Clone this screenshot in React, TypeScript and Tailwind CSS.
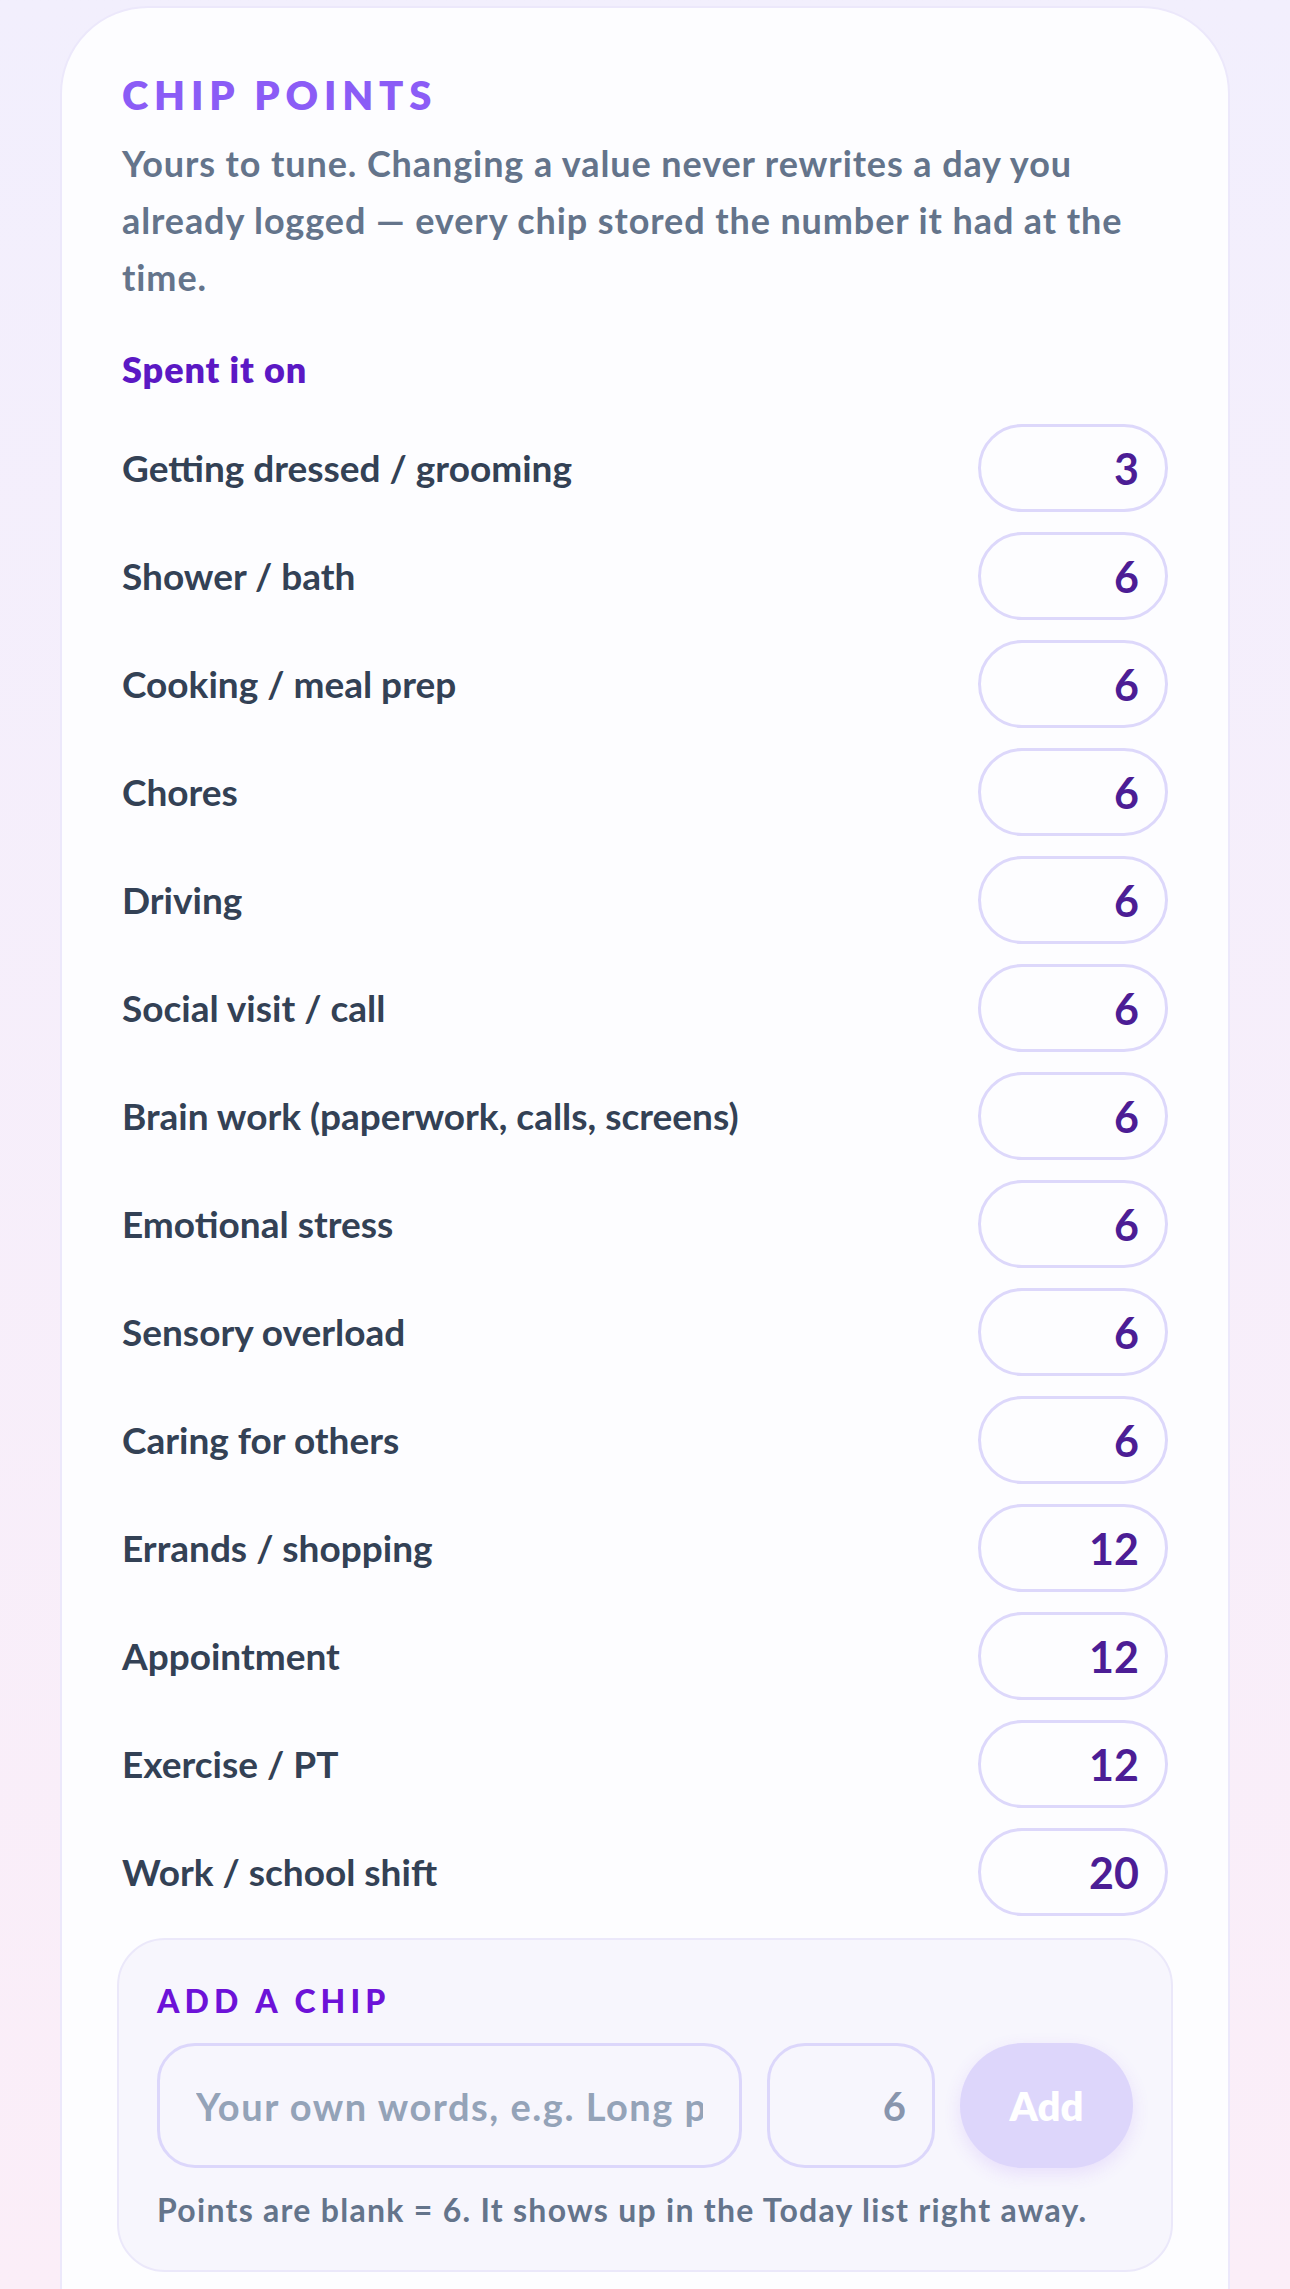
import { useState } from 'react';

const defaultChips = [
  { id: 'dress', label: 'Getting dressed / grooming', points: 3 },
  { id: 'shower', label: 'Shower / bath', points: 6 },
  { id: 'cook', label: 'Cooking / meal prep', points: 6 },
  { id: 'chores', label: 'Chores', points: 6 },
  { id: 'drive', label: 'Driving', points: 6 },
  { id: 'social', label: 'Social visit / call', points: 6 },
  { id: 'brain', label: 'Brain work (paperwork, calls, screens)', points: 6 },
  { id: 'stress', label: 'Emotional stress', points: 6 },
  { id: 'sensory', label: 'Sensory overload', points: 6 },
  { id: 'caring', label: 'Caring for others', points: 6 },
  { id: 'errands', label: 'Errands / shopping', points: 12 },
  { id: 'appt', label: 'Appointment', points: 12 },
  { id: 'exercise', label: 'Exercise / PT', points: 12 },
  { id: 'work', label: 'Work / school shift', points: 20 },
];

const ChipRow = ({ label, value, onChange }: { label: string; value: number; onChange: (v: number) => void }) => (
  <li className="flex h-[88px] items-center justify-between">
    <span className="text-[37px] font-bold text-[#334155]">{label}</span>
    <input
      type="number"
      value={value}
      onChange={(e) => onChange(Number(e.target.value))}
      className="h-[88px] w-[190px] rounded-full border-[3px] border-[#ddd8fb] bg-transparent pr-[26px] text-right text-[43px] font-bold text-[#4c1d95] outline-none [appearance:textfield] [&::-webkit-inner-spin-button]:appearance-none"
    />
  </li>
);

export default function App() {
  const [chips, setChips] = useState(defaultChips);
  const [name, setName] = useState('');
  const [points, setPoints] = useState('');

  return (
    <div className="h-[2289px] overflow-hidden bg-linear-to-b from-[#f2effd] to-[#fbeef8] px-[60px] pt-[6px] font-['Lato',sans-serif]">
      <section className="rounded-[88px] border-2 border-[#ece8fb] bg-[#fdfdff] px-[60px] pt-[63px] pb-[160px]">
        <h2 className="text-[40px] font-extrabold uppercase leading-[48px] tracking-[0.145em] text-[#8b5cf6]">Chip points</h2>
        <p className="mt-[16px] text-[36px] font-bold leading-[57px] tracking-[0.025em] text-[#64748b]">
          Yours to tune. Changing a value never rewrites a day you already logged — every chip stored the number it had at the time.
        </p>
        <h3 className="mt-[41px] text-[36px] font-extrabold leading-[44px] tracking-[0.025em] text-[#5b18c4]">Spent it on</h3>

        <ul className="mt-[33px] flex flex-col gap-[20px]">
          {chips.map((c) => (
            <ChipRow
              key={c.id}
              label={c.label}
              value={c.points}
              onChange={(v) => setChips((prev) => prev.map((p) => (p.id === c.id ? { ...p, points: v } : p)))}
            />
          ))}
        </ul>

        <div className="-mx-[5px] mt-[22px] rounded-[48px] border-2 border-[#ebe8fa] bg-[#f7f6fd] px-[38px] pt-[41px] pb-[40px]">
          <h4 className="text-[32px] font-black uppercase leading-[40px] tracking-[0.16em] text-[#6d12d8]">Add a chip</h4>
          <div className="mt-[22px] flex gap-[25px]">
            <input
              value={name}
              onChange={(e) => setName(e.target.value)}
              placeholder="Your own words, e.g. Long phone call"
              className="h-[125px] min-w-0 flex-1 rounded-[38px] border-[3px] border-[#dcd7fb] bg-transparent px-[36px] text-[38px] font-bold tracking-[0.04em] text-[#334155] outline-none placeholder:text-[#94a3b8]"
            />
            <input
              value={points}
              onChange={(e) => setPoints(e.target.value)}
              placeholder="6"
              inputMode="numeric"
              className="h-[125px] w-[168px] rounded-[38px] border-[3px] border-[#dcd7fb] bg-transparent pr-[26px] text-right text-[40px] font-bold text-[#4c1d95] outline-none placeholder:text-[#8895ad]"
            />
            <button
              disabled={!name.trim()}
              className="h-[125px] w-[173px] rounded-full bg-[#ddd6fb] text-[40px] font-extrabold text-white shadow-[0_6px_18px_rgba(124,58,237,0.12)]"
            >
              Add
            </button>
          </div>
          <p className="mt-[22px] text-[32px] font-bold leading-[40px] tracking-[0.04em] text-[#64748b]">
            Points are blank = 6. It shows up in the Today list right away.
          </p>
        </div>
      </section>
    </div>
  );
}
